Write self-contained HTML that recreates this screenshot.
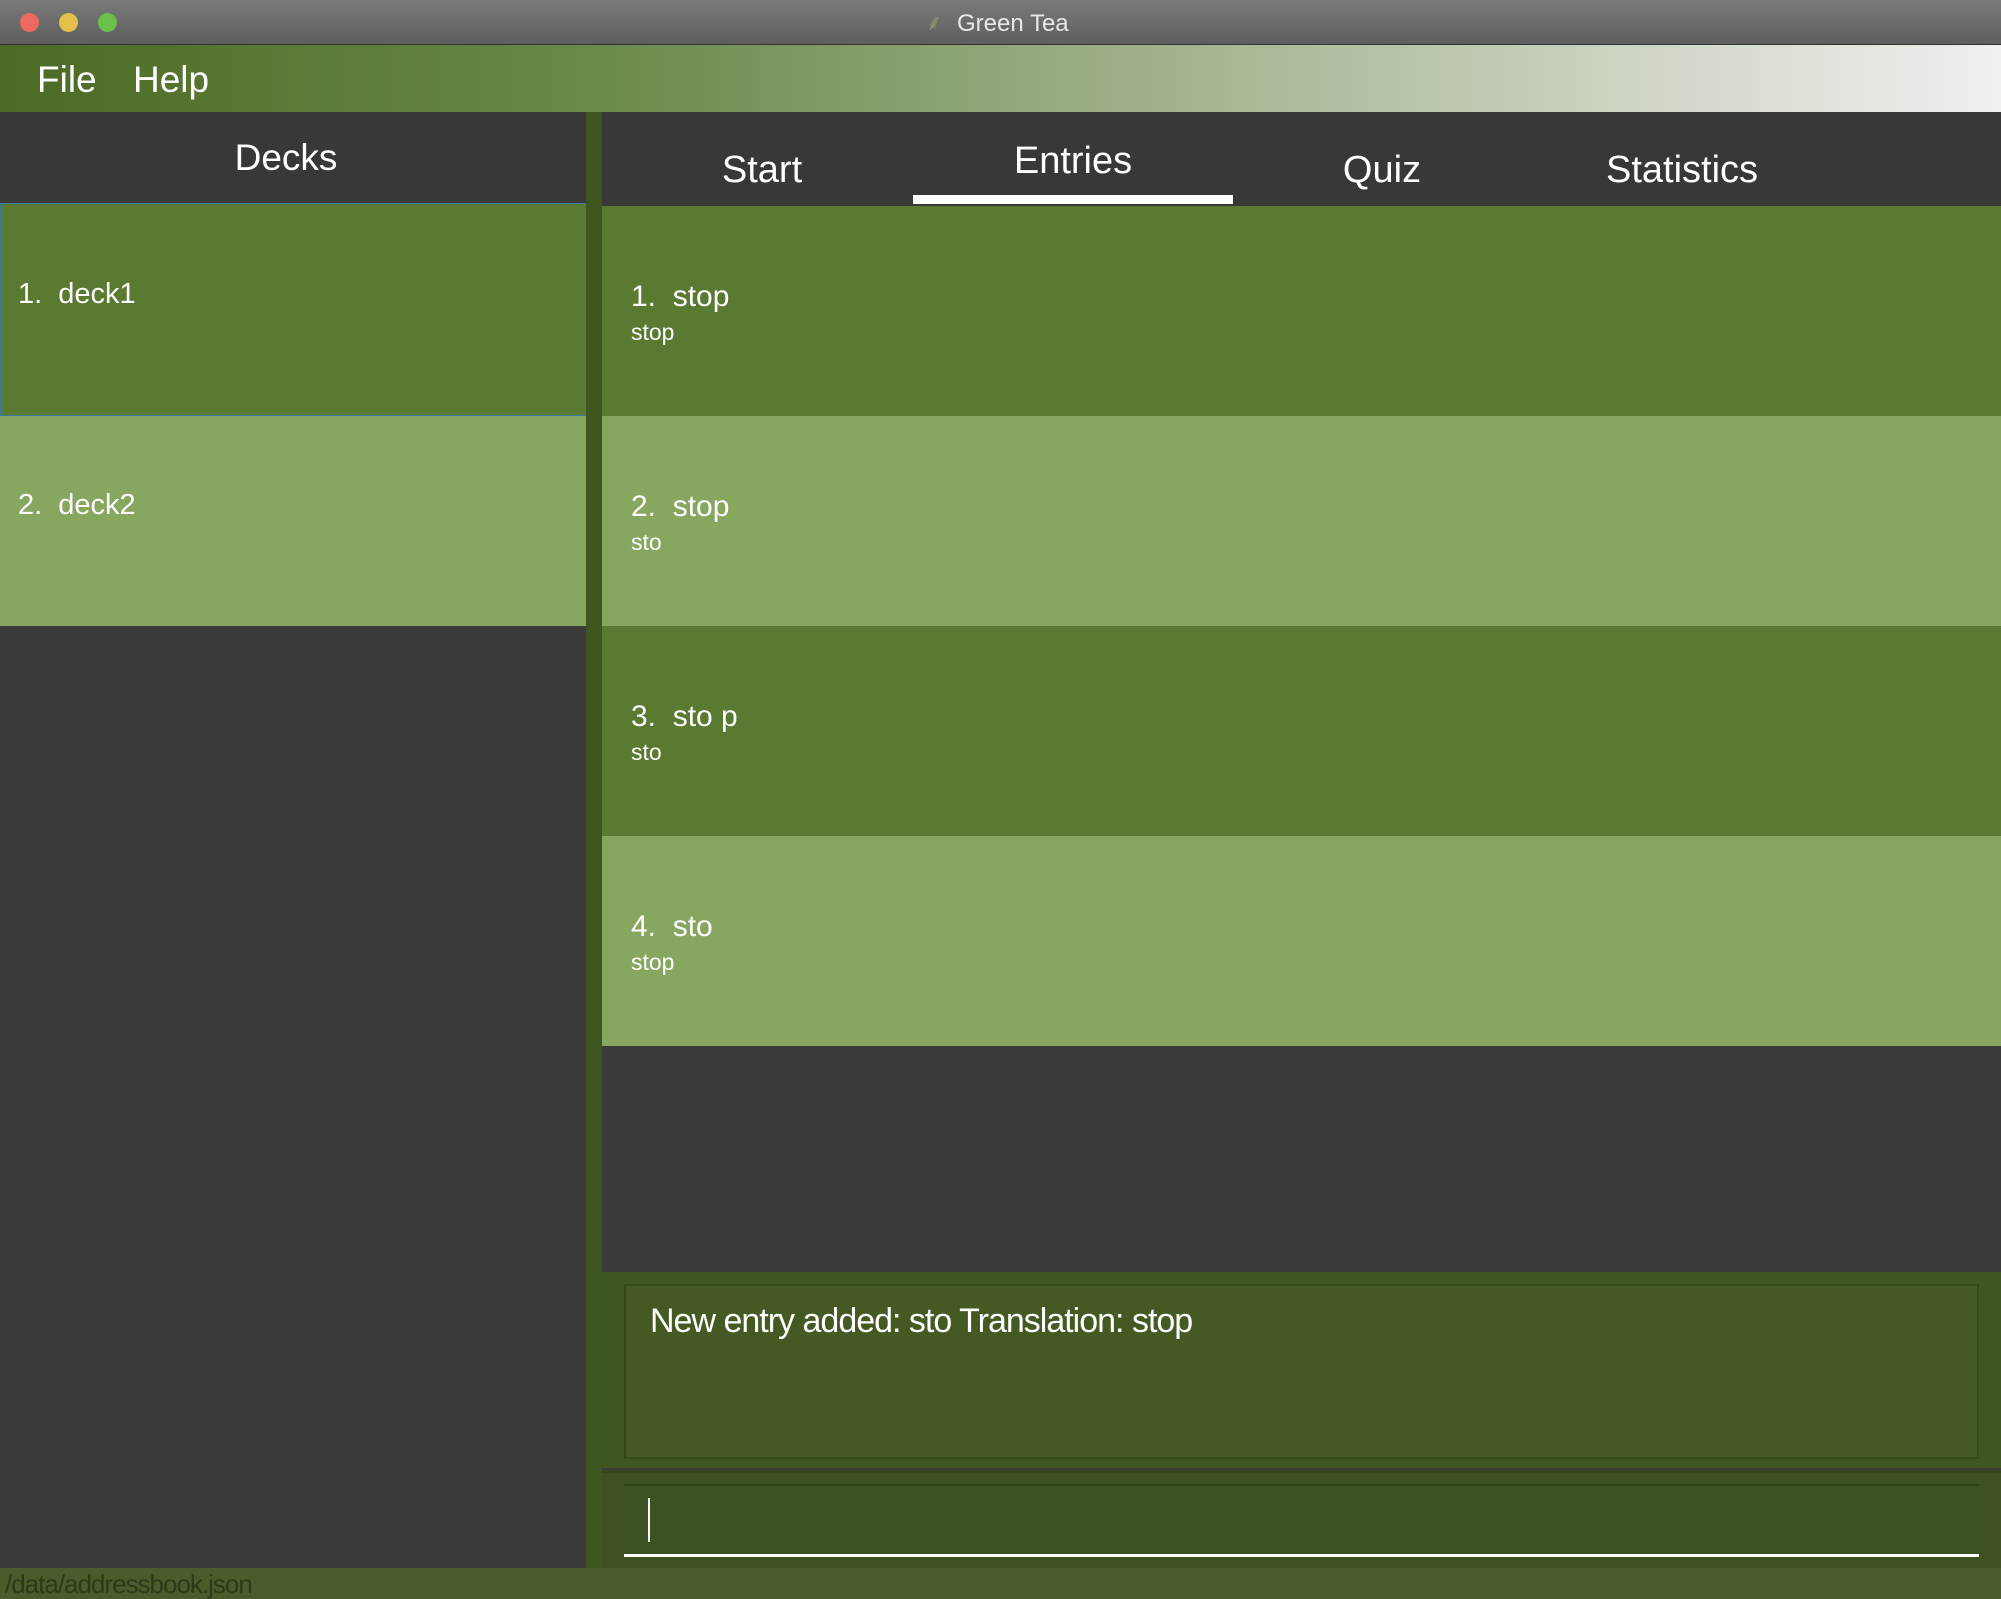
<!DOCTYPE html>
<html><head><meta charset="utf-8"><style>
*{margin:0;padding:0;box-sizing:border-box}
body{width:2001px;height:1599px;overflow:hidden;background:#3a3a3a;font-family:"Liberation Sans",sans-serif;color:#fff;position:relative}
.a{position:absolute}
.t{position:absolute;white-space:nowrap;line-height:1}
</style></head><body>
<div class="a" style="left:0;top:0;width:2001px;height:45px;background:linear-gradient(#7a7a7a,#5e5e5e);border-bottom:1px solid #333"></div>
<div class="a" style="left:20px;top:13px;width:19px;height:19px;border-radius:50%;background:#ee6a5e"></div>
<div class="a" style="left:59px;top:13px;width:19px;height:19px;border-radius:50%;background:#e4c04a"></div>
<div class="a" style="left:98px;top:13px;width:19px;height:19px;border-radius:50%;background:#6cc04a"></div>
<div class="t" style="left:926px;top:12px;font-size:22px;color:#8a9a6a">⸙</div>
<div class="t" style="left:957px;top:12px;font-size:24px;color:#e8e8e8">Green Tea</div>
<div class="a" style="left:0;top:45px;width:2001px;height:67px;background:linear-gradient(90deg,#4c6a24,#6a8a4a 30%,#a5b590 60%,#f0f0f0)"></div>
<div class="t" style="left:37px;top:61px;font-size:37px">File</div>
<div class="t" style="left:133px;top:61px;font-size:37px">Help</div>
<div class="a" style="left:0;top:112px;width:586px;height:91px;background:#383838"></div>
<div class="t" style="left:286px;top:139px;font-size:37px;transform:translateX(-50%)">Decks</div>
<div class="a" style="left:0;top:203px;width:586px;height:213px;background:#5a7a32;border:1px solid #3a7aa0"></div>
<div class="t" style="left:18px;top:280px;font-size:29px">1.&nbsp; deck1</div>
<div class="a" style="left:0;top:416px;width:586px;height:210px;background:#87a760"></div>
<div class="t" style="left:18px;top:491px;font-size:29px">2.&nbsp; deck2</div>
<div class="a" style="left:586px;top:112px;width:16px;height:1456px;background:#3d5620"></div>
<div class="a" style="left:602px;top:112px;width:1399px;height:94px;background:#383838"></div>
<div class="t" style="left:762px;top:151px;font-size:38px;transform:translateX(-50%)">Start</div>
<div class="t" style="left:1073px;top:142px;font-size:38px;transform:translateX(-50%)">Entries</div>
<div class="t" style="left:1382px;top:151px;font-size:38px;transform:translateX(-50%)">Quiz</div>
<div class="t" style="left:1682px;top:151px;font-size:38px;transform:translateX(-50%)">Statistics</div>
<div class="a" style="left:913px;top:195px;width:320px;height:9px;background:#fff"></div>
<div class="a" style="left:602px;top:206px;width:1399px;height:210px;background:#5a7a32"></div>
<div class="a" style="left:602px;top:416px;width:1399px;height:210px;background:#87a760"></div>
<div class="a" style="left:602px;top:626px;width:1399px;height:210px;background:#5a7a32"></div>
<div class="a" style="left:602px;top:836px;width:1399px;height:210px;background:#87a760"></div>
<div class="t" style="left:631px;top:282px;font-size:30px">1.&nbsp; stop</div><div class="t" style="left:631px;top:321px;font-size:23px">stop</div>
<div class="t" style="left:631px;top:492px;font-size:30px">2.&nbsp; stop</div><div class="t" style="left:631px;top:531px;font-size:23px">sto</div>
<div class="t" style="left:631px;top:702px;font-size:30px">3.&nbsp; sto p</div><div class="t" style="left:631px;top:741px;font-size:23px">sto</div>
<div class="t" style="left:631px;top:912px;font-size:30px">4.&nbsp; sto</div><div class="t" style="left:631px;top:951px;font-size:23px">stop</div>
<div class="a" style="left:602px;top:1272px;width:1399px;height:196px;background:#3f5621"></div>
<div class="a" style="left:624px;top:1284px;width:1355px;height:175px;background:#445a22;border:2px solid #36491b"></div>
<div class="t" style="left:650px;top:1304px;font-size:34px;letter-spacing:-1px">New entry added: sto Translation: stop</div>
<div class="a" style="left:602px;top:1470px;width:1399px;height:98px;background:#3d5220;border-top:3px solid #34481b"></div>
<div class="a" style="left:624px;top:1484px;width:1355px;height:73px;background:#3d5221;border-top:2px solid #2f4218;border-bottom:3px solid #fff"></div>
<div class="a" style="left:648px;top:1498px;width:2px;height:44px;background:#fff"></div>
<div class="a" style="left:0;top:1568px;width:2001px;height:31px;background:#485d2b"></div>
<div class="t" style="left:5px;top:1571px;font-size:26px;color:#2b3a18;letter-spacing:-1px">/data/addressbook.json</div>
</body></html>
